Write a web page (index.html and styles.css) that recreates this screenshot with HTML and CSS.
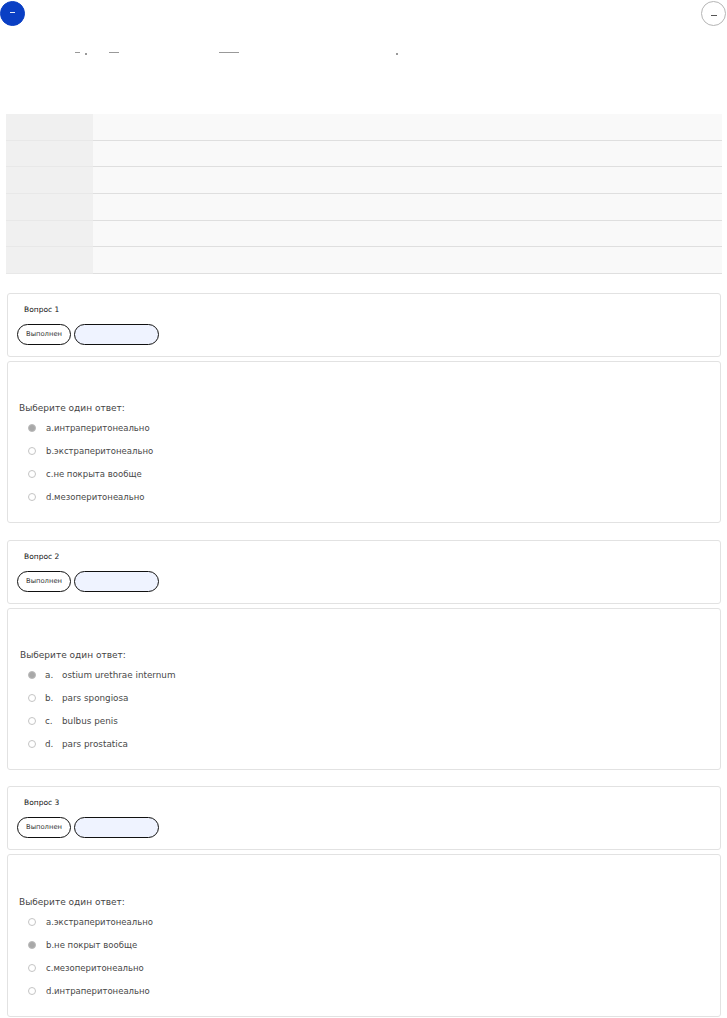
FILE: index.html
```html
<!DOCTYPE html>
<html lang="ru">
<head>
<meta charset="utf-8">
<title>Тест</title>
<link rel="stylesheet" href="styles.css">
</head>
<body>
<header class="topbar">
  <button class="round round-primary" type="button"><span class="dash dash-light"></span></button>
  <button class="round round-plain" type="button"><span class="dash dash-dark"></span></button>
</header>
<div class="crumbs">
  <span class="mark mark-a"></span>
  <span class="mark dot dot-a"></span>
  <span class="mark mark-b"></span>
  <span class="mark mark-c"></span>
  <span class="mark dot dot-b"></span>
</div>
<div class="summary">
  <div class="summary-row"><div class="summary-head"></div><div class="summary-cell"></div></div>
  <div class="summary-row"><div class="summary-head"></div><div class="summary-cell"></div></div>
  <div class="summary-row"><div class="summary-head"></div><div class="summary-cell"></div></div>
  <div class="summary-row"><div class="summary-head"></div><div class="summary-cell"></div></div>
  <div class="summary-row"><div class="summary-head"></div><div class="summary-cell"></div></div>
  <div class="summary-row"><div class="summary-head"></div><div class="summary-cell"></div></div>
</div>
<main class="questions">
  <section class="question">
    <div class="card info">
      <div class="q-title">Вопрос 1</div>
      <div class="pills"><span class="pill">Выполнен</span><span class="pill pill-fill"></span></div>
    </div>
    <div class="card body">
      <div class="prompt">Выберите один ответ:</div>
      <ul class="answers">
        <li class="answer"><span class="radio radio-on"></span><span class="a-text">a.интраперитонеально</span></li>
        <li class="answer"><span class="radio"></span><span class="a-text">b.экстраперитонеально</span></li>
        <li class="answer"><span class="radio"></span><span class="a-text">c.не покрыта вообще</span></li>
        <li class="answer"><span class="radio"></span><span class="a-text">d.мезоперитонеально</span></li>
      </ul>
    </div>
  </section>
  <section class="question">
    <div class="card info">
      <div class="q-title">Вопрос 2</div>
      <div class="pills"><span class="pill">Выполнен</span><span class="pill pill-fill"></span></div>
    </div>
    <div class="card body">
      <div class="prompt prompt-inset">Выберите один ответ:</div>
      <ul class="answers">
        <li class="answer"><span class="radio radio-on"></span><span class="a-text a-latin"><span class="a-num">a.</span>ostium urethrae internum</span></li>
        <li class="answer"><span class="radio"></span><span class="a-text a-latin"><span class="a-num">b.</span>pars spongiosa</span></li>
        <li class="answer"><span class="radio"></span><span class="a-text a-latin"><span class="a-num">c.</span>bulbus penis</span></li>
        <li class="answer"><span class="radio"></span><span class="a-text a-latin"><span class="a-num">d.</span>pars prostatica</span></li>
      </ul>
    </div>
  </section>
  <section class="question">
    <div class="card info">
      <div class="q-title">Вопрос 3</div>
      <div class="pills"><span class="pill">Выполнен</span><span class="pill pill-fill"></span></div>
    </div>
    <div class="card body">
      <div class="prompt">Выберите один ответ:</div>
      <ul class="answers">
        <li class="answer"><span class="radio"></span><span class="a-text">a.экстраперитонеально</span></li>
        <li class="answer"><span class="radio radio-on"></span><span class="a-text">b.не покрыт вообще</span></li>
        <li class="answer"><span class="radio"></span><span class="a-text">c.мезоперитонеально</span></li>
        <li class="answer"><span class="radio"></span><span class="a-text">d.интраперитонеально</span></li>
      </ul>
    </div>
  </section>
</main>
</body>
</html>
```
FILE: styles.css
```css
* { box-sizing: border-box; }
html, body { margin: 0; padding: 0; background: #fff; }
body {
  font-family: "DejaVu Sans", "Liberation Sans", sans-serif;
  color: #333;
  font-size: 9px;
  height: 1018px;
  overflow: hidden;
}
.topbar {
  display: flex;
  justify-content: space-between;
  padding: 1px 1px 0 0;
  height: 26px;
}
.round {
  width: 25px;
  height: 25px;
  padding: 0;
  border-radius: 50%;
  display: flex;
  align-items: center;
  justify-content: center;
}
.round-primary { background: #0a3fc4; border: 1px solid #0a3fc4; }
.round-plain { background: #fff; border: 1px solid #b5b5b5; }
.dash { display: block; width: 5px; height: 1px; margin-top: -3px; }
.round-plain .dash { width: 6px; margin-top: 3px; }
.dash-light { background: #e8ecf8; }
.dash-dark { background: #555; }
.crumbs {
  position: relative;
  height: 88.3px;
}
.mark { position: absolute; height: 1px; background: #999; top: 26px; }
.mark-a { left: 75px; width: 5px; }
.mark-b { left: 109px; width: 10px; }
.mark-c { left: 219px; width: 20px; }
.dot { width: 2px; height: 2px; top: 27px; }
.dot-a { left: 85px; }
.dot-b { left: 396px; }
.summary {
  margin: 0 5px 0 6px;
  height: 159.7px;
}
.summary-row {
  display: flex;
  height: 26.6px;
}
.summary-head { width: 87px; background: #f0f0f0; border-bottom: 1px solid #e8e8e8; }
.summary-cell { flex: 1; background: #f9f9f9; border-bottom: 1px solid #dfdfdf; }
.questions {
  display: flex;
  flex-direction: column;
  gap: 16.2px;
  padding: 19px 6px 0 7px;
}
.question { display: flex; flex-direction: column; gap: 4px; }
.card {
  background: #fff;
  border: 1px solid #e2e2e2;
  border-radius: 3px;
}
.info {
  height: 64px;
  padding: 10px 9px 0 9px;
}
.q-title {
  font-size: 7.5px;
  line-height: 11px;
  color: #111;
  margin-left: 7px;
  font-weight: 500;
}
.pills { display: flex; gap: 3px; margin-top: 9px; }
.pill {
  width: 54px;
  height: 21px;
  border: 1px solid #111;
  border-radius: 10.5px;
  background: #fff;
  font-size: 6.8px;
  line-height: 19px;
  text-align: center;
  color: #333;
}
.pill-fill { width: 85px; background: #eff3ff; }
.body {
  height: 162.5px;
  padding: 40.2px 0 0 11px;
}
.prompt {
  font-size: 9px;
  line-height: 13px;
  color: #444;
}
.prompt-inset { margin-left: 1px; }
.answers {
  list-style: none;
  margin: 7px 0 0 0;
  padding: 0 0 0 9px;
  display: flex;
  flex-direction: column;
  gap: 10px;
}
.answer {
  display: flex;
  align-items: center;
  height: 13px;
}
.radio {
  width: 8px;
  height: 8px;
  margin-top: -1px;
  border-radius: 50%;
  border: 1px solid #c4c4c4;
  background: #fff;
  flex: none;
}
.radio-on { background: #a8a8a8; border-color: #bbb; }
.a-text {
  margin-left: 10px;
  font-size: 8.5px;
  line-height: 13px;
  color: #484848;
}
.a-latin { margin-left: 9px; font-size: 8.8px; }
.a-num {
  display: inline-block;
  width: 17px;
}
```
